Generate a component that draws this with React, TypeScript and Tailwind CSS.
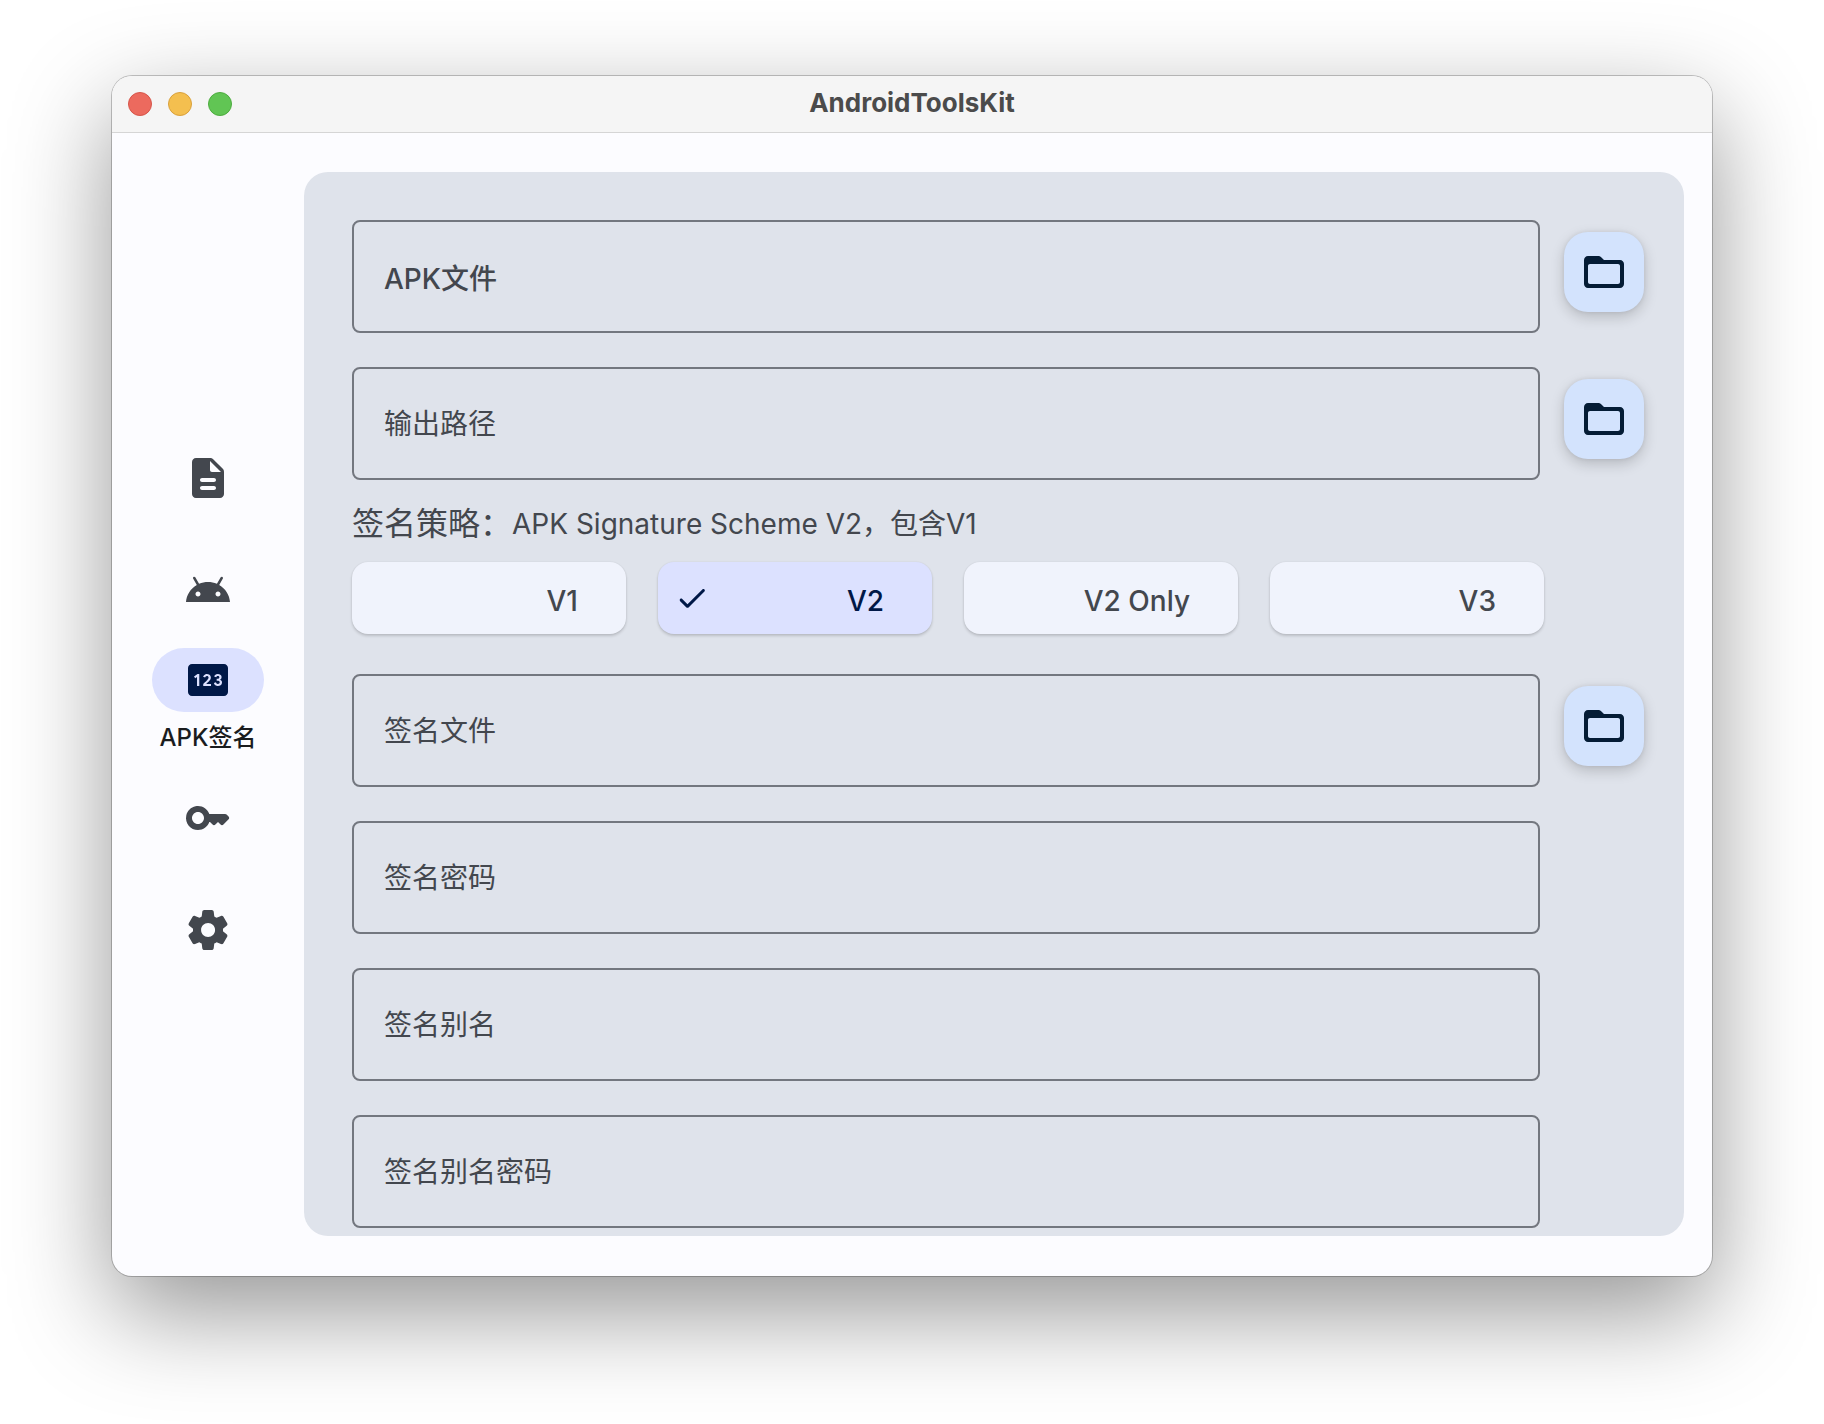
import clsx from "clsx";
import { FC, ReactNode, useState } from "react";
import { MdPin } from "react-icons/md";

const Icon: FC<{ d: string; className?: string }> = ({ d, className }) => (
  <svg
    viewBox="0 0 24 24"
    fill="currentColor"
    aria-hidden="true"
    className={clsx("shrink-0", className ?? "size-12")}
  >
    <path d={d} />
  </svg>
);

const paths = {
  description:
    "M14.59 2.59c-.38-.38-.89-.59-1.42-.59H6c-1.1 0-2 .9-2 2v16c0 1.1.89 2 1.99 2H18c1.1 0 2-.9 2-2V8.83c0-.53-.21-1.04-.59-1.41l-4.82-4.83zM15 18H9c-.55 0-1-.45-1-1s.45-1 1-1h6c.55 0 1 .45 1 1s-.45 1-1 1zm0-4H9c-.55 0-1-.45-1-1s.45-1 1-1h6c.55 0 1 .45 1 1s-.45 1-1 1zm-2-6V3.5L18.5 9H14c-.55 0-1-.45-1-1z",
  android:
    "M17.6 9.48l1.84-3.18c.16-.31.04-.69-.26-.85-.29-.15-.65-.06-.83.22l-1.88 3.24c-2.86-1.21-6.08-1.21-8.94 0L5.65 5.67c-.19-.29-.58-.38-.87-.2-.28.18-.37.54-.22.83L6.4 9.48C3.3 11.25 1.28 14.44 1 18h22c-.28-3.56-2.3-6.75-5.4-8.52zM7 15.25c-.69 0-1.25-.56-1.25-1.25S6.31 12.75 7 12.75s1.25.56 1.25 1.25S7.69 15.25 7 15.25zm10 0c-.69 0-1.25-.56-1.25-1.25s.56-1.25 1.25-1.25 1.25.56 1.25 1.25-.56 1.25-1.25 1.25z",
  key: "M20.59 10h-7.94C11.7 7.31 8.89 5.5 5.77 6.12c-2.29.46-4.15 2.3-4.63 4.58C.32 14.57 3.26 18 7 18c2.61 0 4.83-1.67 5.65-4H13l1.29 1.29c.39.39 1.02.39 1.41 0L17 14l1.29 1.29c.39.39 1.03.39 1.42 0l2.59-2.61c.39-.39.39-1.03-.01-1.42l-.99-.97c-.2-.19-.45-.29-.71-.29zM7 15c-1.65 0-3-1.35-3-3s1.35-3 3-3 3 1.35 3 3-1.35 3-3 3z",
  settings:
    "M19.5 12c0-.23-.01-.45-.03-.68l1.86-1.41c.4-.3.51-.86.26-1.3l-1.87-3.23c-.25-.44-.79-.62-1.25-.42l-2.15.91c-.37-.26-.76-.49-1.17-.68l-.29-2.31C14.8 2.38 14.37 2 13.87 2h-3.73c-.51 0-.94.38-1 .88l-.29 2.31c-.41.19-.8.42-1.17.68l-2.15-.91c-.46-.2-1-.02-1.25.42L2.41 8.62c-.25.44-.14.99.26 1.3l1.86 1.41c-.02.22-.03.44-.03.67s.01.45.03.68l-1.86 1.41c-.4.3-.51.86-.26 1.3l1.87 3.23c.25.44.79.62 1.25.42l2.15-.91c.37.26.76.49 1.17.68l.29 2.31c.06.5.49.88.99.88h3.73c.5 0 .93-.38.99-.88l.29-2.31c.41-.19.8-.42 1.17-.68l2.15.91c.46.2 1 .02 1.25-.42l1.87-3.23c.25-.44.14-.99-.26-1.3l-1.86-1.41c.03-.23.04-.45.04-.68zm-7.46 3.5c-1.93 0-3.5-1.57-3.5-3.5s1.57-3.5 3.5-3.5 3.5 1.57 3.5 3.5-1.57 3.5-3.5 3.5z",
  folder:
    "M20 6h-8l-1.41-1.41C10.21 4.21 9.7 4 9.17 4H4c-1.1 0-1.99.9-1.99 2L2 18c0 1.1.9 2 2 2h16c1.1 0 2-.9 2-2V8c0-1.1-.9-2-2-2zm-1 12H5c-.55 0-1-.45-1-1V9c0-.55.45-1 1-1h14c.55 0 1 .45 1 1v8c0 .55-.45 1-1 1z",
  done: "M9 16.2l-3.5-3.5c-.39-.39-1.01-.39-1.4 0-.39.39-.39 1.01 0 1.4l4.19 4.19c.39.39 1.02.39 1.41 0L20.3 7.7c.39-.39.39-1.01 0-1.4-.39-.39-1.01-.39-1.4 0L9 16.2z",
};

const navItems: { key: string; label: string; icon: ReactNode }[] = [
  { key: "info", label: "APK信息", icon: <Icon d={paths.description} /> },
  { key: "android", label: "Android", icon: <Icon d={paths.android} /> },
  {
    key: "sign",
    label: "APK签名",
    icon: <MdPin className="size-12" aria-hidden="true" />,
  },
  { key: "key", label: "签名生成", icon: <Icon d={paths.key} /> },
  { key: "settings", label: "设置", icon: <Icon d={paths.settings} /> },
];

const schemes = [
  { name: "V1", desc: "APK Signature Scheme V1" },
  { name: "V2", desc: "APK Signature Scheme V2，包含V1" },
  { name: "V2 Only", desc: "APK Signature Scheme V2" },
  { name: "V3", desc: "APK Signature Scheme V3" },
];

const TitleBar: FC = () => (
  <header className="grid h-[57px] shrink-0 grid-cols-3 items-center border-b border-[#d5d5d5] bg-[#f5f5f5] px-4">
    <div className="flex gap-4">
      <button
        aria-label="关闭"
        className="size-6 rounded-full border border-[#d6554a] bg-[#ec6a5e]"
      />
      <button
        aria-label="最小化"
        className="size-6 rounded-full border border-[#d9a03c] bg-[#f4bf4f]"
      />
      <button
        aria-label="最大化"
        className="size-6 rounded-full border border-[#4dac3f] bg-[#61c554]"
      />
    </div>
    <h1 className="pb-1 text-center text-[26px] font-bold text-[#4b4b4b]">
      AndroidToolsKit
    </h1>
  </header>
);

const NavRail: FC<{ current: string; onChange: (key: string) => void }> = ({
  current,
  onChange,
}) => (
  <nav className="flex w-48 shrink-0 flex-col items-center justify-center pb-0.5">
    {navItems.map(({ key, label, icon }) => {
      const active = key === current;
      return (
        <button
          key={key}
          aria-label={label}
          aria-current={active ? "page" : undefined}
          onClick={() => onChange(key)}
          className={clsx(
            "flex w-40 flex-col items-center",
            active
              ? "h-[116px] gap-2 pt-0.5"
              : "h-28 justify-center text-[#43474e]"
          )}
        >
          <span
            className={clsx(
              "flex h-16 w-28 items-center justify-center rounded-full",
              active && "bg-[#dce1ff] text-[#001847]"
            )}
          >
            {icon}
          </span>
          {active && (
            <span className="text-2xl leading-9 font-medium text-[#1a1c1e]">
              {label}
            </span>
          )}
        </button>
      );
    })}
  </nav>
);

const Field: FC<{
  label: string;
  type?: string;
  picker?: boolean;
  className?: string;
}> = ({ label, type = "text", picker, className }) => (
  <div className="flex gap-6">
    <input
      type={type}
      aria-label={label}
      placeholder={label}
      className={clsx(
        "h-[113px] min-w-0 flex-1 rounded-lg border-2 border-[#73777f] bg-transparent px-[30px] text-[28px] text-[#1a1c1e] outline-none placeholder:text-[#43474e] placeholder:opacity-100 focus:border-[#4355b9]",
        className
      )}
    />
    {picker ? (
      <button
        aria-label={`选择${label}`}
        className="mt-3 flex size-20 shrink-0 items-center justify-center rounded-3xl bg-[#d3e3fd] text-[#041c35] shadow-[0_5px_14px_rgba(0,0,0,0.18),0_0_4px_rgba(0,0,0,0.08)]"
      >
        <Icon d={paths.folder} />
      </button>
    ) : (
      <div className="w-20 shrink-0" />
    )}
  </div>
);

const SchemePicker: FC = () => {
  const [scheme, setScheme] = useState("V2");
  const desc = schemes.find(({ name }) => name === scheme)?.desc;

  return (
    <fieldset className="mb-10 pr-[100px]">
      <legend className="flex h-[82px] items-center pt-1.5 text-[28px] text-[#43474e]">
        <span className="text-[32px]">签名策略：</span>
        <span>{desc}</span>
      </legend>
      <div className="grid grid-cols-4 gap-8">
        {schemes.map(({ name }) => {
          const checked = name === scheme;
          return (
            <label
              key={name}
              className={clsx(
                "flex h-[72px] items-center rounded-2xl pr-12 pl-4 text-[28px] font-medium shadow-[0_2px_3px_rgba(0,0,0,0.16),0_0_2px_rgba(0,0,0,0.08)]",
                checked
                  ? "bg-[#dce1ff] text-[#001847]"
                  : "bg-[#f0f3fc] text-[#43474e]"
              )}
            >
              <input
                type="radio"
                name="scheme"
                checked={checked}
                onChange={() => setScheme(name)}
                className="appearance-none"
              />
              {checked && <Icon d={paths.done} className="size-9" />}
              <span className="ml-auto pt-1.5">{name}</span>
            </label>
          );
        })}
      </div>
    </fieldset>
  );
};

const App: FC = () => {
  const [page, setPage] = useState("sign");

  return (
    <div className="flex h-screen flex-col bg-white px-28 pt-[76px] pb-[148px] font-['Inter','Noto_Sans_CJK_SC',sans-serif]">
      <div className="flex min-h-0 flex-1 flex-col overflow-hidden rounded-[20px] bg-[#fcfcff] shadow-[0_0_0_1px_rgba(0,0,0,0.22),0_36px_100px_rgba(0,0,0,0.42)]">
        <TitleBar />
        <div className="flex min-h-0 flex-1">
          <NavRail current={page} onChange={setPage} />
          <main className="mt-[39px] mr-7 mb-10 min-w-0 flex-1 overflow-y-auto rounded-3xl bg-[#dfe3eb] pt-12 pr-10 pl-12">
            <div className="flex flex-col gap-[34px]">
              <Field
                label="APK文件"
                picker
                className="pt-1 font-medium"
              />
              <Field label="输出路径" picker />
            </div>
            <SchemePicker />
            <div className="flex flex-col gap-[34px]">
              <Field label="签名文件" picker />
              <Field label="签名密码" type="password" />
              <Field label="签名别名" />
              <Field label="签名别名密码" type="password" />
            </div>
          </main>
        </div>
      </div>
    </div>
  );
};

export default App;
